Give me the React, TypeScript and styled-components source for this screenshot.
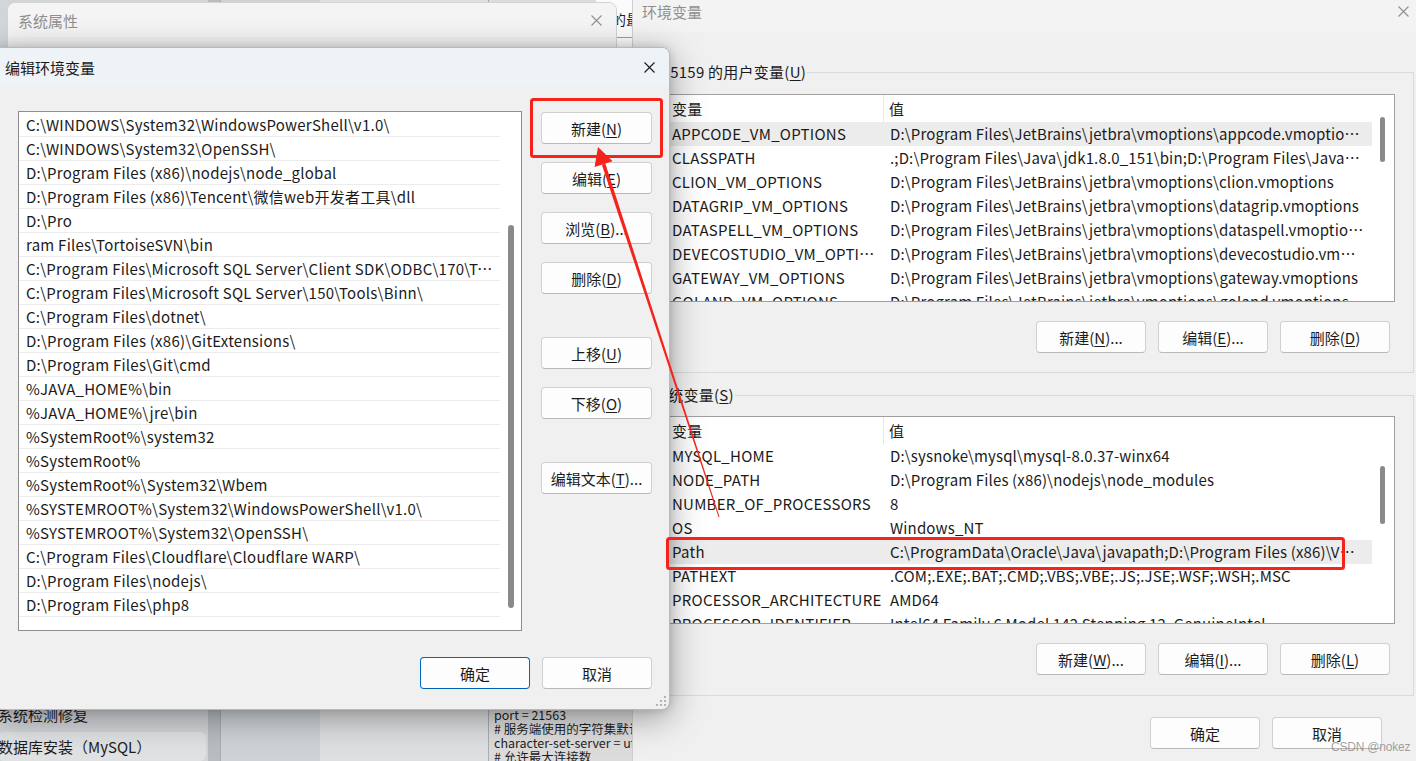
import React from "react";
import styled, { createGlobalStyle } from "styled-components";

const GlobalStyle = createGlobalStyle`
  html, body { margin: 0; padding: 0; }
  body {
    font-family: "Noto Sans CJK SC", "Noto Sans", sans-serif;
    font-size: 15px;
    letter-spacing: 0.25px;
    color: #1b1b1b;
    overflow: hidden;
    background: #eceef0;
  }
  * { box-sizing: border-box; }
  u { text-underline-offset: 2px; text-decoration-thickness: 1px; }
`;

const Desktop = styled.div`
  position: relative;
  width: 1416px;
  height: 761px;
  overflow: hidden;
  background: #eceef0;
`;

/* ---------- app behind everything (bottom left) ---------- */

const BackApp = styled.div`
  position: absolute;
  left: 0;
  top: 0;
  width: 632px;
  height: 761px;
  display: grid;
  grid-template-columns: 208px 12px 100px 168px 144px;
`;

const BackColumn = styled.div<{ $bg: string; $border?: boolean }>`
  background: ${(p) => p.$bg};
  border-left: ${(p) => (p.$border ? "1px solid #a9adb0" : "none")};
  display: flex;
  flex-direction: column;
  justify-content: flex-end;
  overflow: hidden;
`;

const SideItem = styled.div<{ $active?: boolean }>`
  height: 29px;
  line-height: 29px;
  margin: 0 0 ${(p) => (p.$active ? "0" : "3px")} -2px;
  width: 208px;
  border-radius: 6px;
  white-space: nowrap;
  letter-spacing: 0;
  color: #1d1d1d;
  background: ${(p) => (p.$active ? "rgba(255,255,255,0.28)" : "transparent")};
`;

const CodeText = styled.div`
  font-size: 12.5px;
  line-height: 14px;
  letter-spacing: 0;
  color: #1e1e1e;
  white-space: nowrap;
  padding-left: 5px;
  margin-bottom: -3px;
`;

/* ---------- generic window chrome ---------- */

const TitleBar = styled.div<{ $h: number; $bg: string; $pl: number; $pr: number; $pb?: number }>`
  height: ${(p) => p.$h}px;
  flex-shrink: 0;
  display: flex;
  align-items: center;
  justify-content: space-between;
  padding: 0 ${(p) => p.$pr}px ${(p) => p.$pb || 0}px ${(p) => p.$pl}px;
  background: ${(p) => p.$bg};
`;

const WinTitle = styled.span<{ $active?: boolean }>`
  font-size: 15px;
  letter-spacing: 0;
  color: ${(p) => (p.$active ? "#1a1a1a" : "#8f8f8f")};
  white-space: nowrap;
`;

function CloseIcon({ color }: { color: string }) {
  return (
    <svg width="11" height="11" viewBox="0 0 11 11">
      <path d="M0.5 0.5 L10.5 10.5 M10.5 0.5 L0.5 10.5" stroke={color} strokeWidth="1.1" fill="none" />
    </svg>
  );
}

/* ---------- partly hidden windows at top ---------- */

const DocWindow = styled.div`
  position: absolute;
  left: 596px;
  top: 0;
  width: 36px;
  height: 90px;
  background: #fbfbfb;
`;

const DocCell = styled.div`
  height: 38px;
  line-height: 38px;
  padding-left: 16px;
  font-size: 14px;
  white-space: nowrap;
  color: #222;
  border-bottom: 1px solid #9c9c9c;
`;

const SysWindow = styled.div`
  position: absolute;
  left: 7px;
  top: 2px;
  width: 610px;
  height: 420px;
  background: #f0f0f0;
  border: 1px solid #d3d3d3;
  border-radius: 8px 8px 0 0;
  overflow: hidden;
`;

/* ---------- environment variables window ---------- */

const EnvWindow = styled.div`
  position: absolute;
  left: 632px;
  top: 0;
  width: 784px;
  height: 761px;
  background: #f0f0f0;
  border-left: 1px solid #cfcfcf;
  display: flex;
  flex-direction: column;
`;

const EnvBody = styled.div`
  padding: 30px 2px 0 12px;
  display: flex;
  flex-direction: column;
`;

const Group = styled.fieldset<{ $pt: number; $pb: number; $mt?: number }>`
  margin: ${(p) => p.$mt || 0}px 0 0;
  min-width: 0;
  border: 1px solid #dadada;
  padding: ${(p) => p.$pt}px 18px ${(p) => p.$pb}px 18px;
`;

const GroupLegend = styled.legend`
  padding: 0 1px;
  margin-left: -12px;
  height: 20px;
  line-height: 20px;
  font-size: 15px;
  white-space: nowrap;
`;

const ListView = styled.div`
  height: 208px;
  border: 1px solid #a0a0a0;
  background: #fff;
  display: grid;
  grid-template-columns: 1fr 22px;
  overflow: hidden;
`;

const ListRows = styled.div`
  min-width: 0;
  overflow: hidden;
`;

const HeaderRow = styled.div`
  display: grid;
  grid-template-columns: 219px 1fr;
  height: 27px;
`;

const HeaderCell = styled.div<{ $first?: boolean }>`
  line-height: 27px;
  padding-left: ${(p) => (p.$first ? 7 : 5)}px;
  border-right: ${(p) => (p.$first ? "1px solid #e6e6e6" : "none")};
`;

const DataRow = styled.div<{ $selected?: boolean }>`
  display: grid;
  grid-template-columns: 219px 1fr;
  height: 24px;
  line-height: 24px;
  background: ${(p) => (p.$selected ? "#ececec" : "transparent")};
`;

const Cell = styled.div<{ $first?: boolean }>`
  white-space: nowrap;
  overflow: hidden;
  text-overflow: ellipsis;
  letter-spacing: ${(p) => (p.$first ? "0.25px" : "0.15px")};
  padding: ${(p) => (p.$first ? "0 2px 0 7px" : "0 8px 0 6px")};
`;

const ScrollTrack = styled.div<{ $top: number; $left: number }>`
  padding: ${(p) => p.$top}px 0 0 ${(p) => p.$left}px;
`;

const ScrollThumb = styled.div<{ $h: number; $w: number }>`
  width: ${(p) => p.$w}px;
  height: ${(p) => p.$h}px;
  background: #8a8a8a;
  border-radius: 3px;
`;

const ButtonRow = styled.div<{ $mt: number; $pr: number }>`
  margin-top: ${(p) => p.$mt}px;
  padding-right: ${(p) => p.$pr}px;
  display: flex;
  justify-content: flex-end;
  gap: 12px;
`;

const Button = styled.button<{ $primary?: boolean; $mt?: number; $full?: boolean }>`
  width: ${(p) => (p.$full ? "100%" : "110px")};
  height: 32px;
  flex-shrink: 0;
  margin: ${(p) => p.$mt || 0}px 0 0;
  padding: 0;
  font-family: inherit;
  font-size: 15px;
  letter-spacing: 0;
  color: #1b1b1b;
  background: #fdfdfd;
  border: 1px solid ${(p) => (p.$primary ? "#0067c0" : "#d0d0d0")};
  border-bottom-color: ${(p) => (p.$primary ? "#0060b4" : "#b9b9b9")};
  border-radius: 4px;
  white-space: nowrap;
`;

/* ---------- edit dialog ---------- */

const EditDialog = styled.div`
  position: absolute;
  left: -6px;
  top: 47px;
  width: 676px;
  height: 663px;
  background: #f0f0f0;
  border: 1px solid #b9b9b9;
  border-radius: 8px;
  box-shadow: 0 8px 34px rgba(0, 0, 0, 0.36), 0 0 10px rgba(0, 0, 0, 0.14);
  display: flex;
  flex-direction: column;
  overflow: hidden;
`;

const DialogBody = styled.div`
  padding: 25px 17px 0 23px;
  display: grid;
  grid-template-columns: 504px 111px;
  column-gap: 19px;
`;

const PathList = styled.div`
  height: 520px;
  border: 1px solid #8e8e8e;
  background: #fff;
  display: grid;
  grid-template-columns: 1fr 21px;
  overflow: hidden;
`;

const PathRows = styled.div`
  min-width: 0;
  padding-top: 1px;
  overflow: hidden;
`;

const PathRow = styled.div`
  height: 24px;
  line-height: 24px;
  padding: 0 4px 0 7px;
  border-bottom: 1px solid #ececec;
  white-space: nowrap;
  overflow: hidden;
  text-overflow: ellipsis;
`;

const SideButtons = styled.div`
  padding-top: 1px;
  display: flex;
  flex-direction: column;
  gap: 18px;
`;

const DialogFooter = styled.div`
  padding: 26px 17px 0 0;
  display: flex;
  justify-content: flex-end;
  gap: 12px;
`;

const Grip = styled.svg`
  position: absolute;
  right: 2px;
  bottom: 2px;
`;

/* ---------- annotation overlay ---------- */

const Overlay = styled.svg`
  position: absolute;
  left: 0;
  top: 0;
  pointer-events: none;
`;

const Watermark = styled.div`
  position: absolute;
  left: 1331px;
  top: 739px;
  font-size: 12px;
  line-height: 16px;
  color: rgba(130, 130, 130, 0.75);
  font-family: "Liberation Sans", Arial, sans-serif;
  letter-spacing: -0.2px;
`;

const paths = [
  "C:\\WINDOWS\\System32\\WindowsPowerShell\\v1.0\\",
  "C:\\WINDOWS\\System32\\OpenSSH\\",
  "D:\\Program Files (x86)\\nodejs\\node_global",
  "D:\\Program Files (x86)\\Tencent\\微信web开发者工具\\dll",
  "D:\\Pro",
  "ram Files\\TortoiseSVN\\bin",
  "C:\\Program Files\\Microsoft SQL Server\\Client SDK\\ODBC\\170\\Tools\\Binn\\",
  "C:\\Program Files\\Microsoft SQL Server\\150\\Tools\\Binn\\",
  "C:\\Program Files\\dotnet\\",
  "D:\\Program Files (x86)\\GitExtensions\\",
  "D:\\Program Files\\Git\\cmd",
  "%JAVA_HOME%\\bin",
  "%JAVA_HOME%\\jre\\bin",
  "%SystemRoot%\\system32",
  "%SystemRoot%",
  "%SystemRoot%\\System32\\Wbem",
  "%SYSTEMROOT%\\System32\\WindowsPowerShell\\v1.0\\",
  "%SYSTEMROOT%\\System32\\OpenSSH\\",
  "C:\\Program Files\\Cloudflare\\Cloudflare WARP\\",
  "D:\\Program Files\\nodejs\\",
  "D:\\Program Files\\php8",
];

const jb = "D:\\Program Files\\JetBrains\\jetbra\\vmoptions\\";

const userVars: [string, string][] = [
  ["APPCODE_VM_OPTIONS", jb + "appcode.vmoptions;"],
  ["CLASSPATH", ".;D:\\Program Files\\Java\\jdk1.8.0_151\\bin;D:\\Program Files\\Java\\jdk1.8.0_151\\lib"],
  ["CLION_VM_OPTIONS", jb + "clion.vmoptions"],
  ["DATAGRIP_VM_OPTIONS", jb + "datagrip.vmoptions"],
  ["DATASPELL_VM_OPTIONS", jb + "dataspell.vmoptions"],
  ["DEVECOSTUDIO_VM_OPTIONS", jb + "devecostudio.vmoptions"],
  ["GATEWAY_VM_OPTIONS", jb + "gateway.vmoptions"],
  ["GOLAND_VM_OPTIONS", jb + "goland.vmoptions"],
];

const systemVars: [string, string][] = [
  ["MYSQL_HOME", "D:\\sysnoke\\mysql\\mysql-8.0.37-winx64"],
  ["NODE_PATH", "D:\\Program Files (x86)\\nodejs\\node_modules"],
  ["NUMBER_OF_PROCESSORS", "8"],
  ["OS", "Windows_NT"],
  ["Path", "C:\\ProgramData\\Oracle\\Java\\javapath;D:\\Program Files (x86)\\VMware\\VMware Workstation\\bin\\"],
  ["PATHEXT", ".COM;.EXE;.BAT;.CMD;.VBS;.VBE;.JS;.JSE;.WSF;.WSH;.MSC"],
  ["PROCESSOR_ARCHITECTURE", "AMD64"],
  ["PROCESSOR_IDENTIFIER", "Intel64 Family 6 Model 142 Stepping 12, GenuineIntel"],
];

interface VarTableProps {
  rows: [string, string][];
  selected: number;
  thumbTop: number;
  thumbHeight: number;
}

function VarTable({ rows, selected, thumbTop, thumbHeight }: VarTableProps) {
  return (
    <ListView>
      <ListRows>
        <HeaderRow>
          <HeaderCell $first>变量</HeaderCell>
          <HeaderCell>值</HeaderCell>
        </HeaderRow>
        {rows.map(([name, value], i) => (
          <DataRow key={name} $selected={i === selected}>
            <Cell $first>{name}</Cell>
            <Cell>{value}</Cell>
          </DataRow>
        ))}
      </ListRows>
      <ScrollTrack $top={thumbTop} $left={8}>
        <ScrollThumb $w={5} $h={thumbHeight} />
      </ScrollTrack>
    </ListView>
  );
}

export default function App() {
  // arrow geometry: tip near the 新建 button, tail down by the Path row
  const tip = [598, 147];
  const tail = [719, 517];
  const len = Math.hypot(tail[0] - tip[0], tail[1] - tip[1]);
  const u = [(tail[0] - tip[0]) / len, (tail[1] - tip[1]) / len];
  const n = [u[1], -u[0]];
  const base = [tip[0] + u[0] * 18, tip[1] + u[1] * 18];
  const pt = (p: number[], k: number) => `${p[0] + n[0] * k},${p[1] + n[1] * k}`;
  const head = `${tip[0]},${tip[1]} ${pt(base, 9.5)} ${pt(base, -9.5)}`;
  const shaft = `${pt(base, 1.8)} ${pt(tail, 0.5)} ${pt(tail, -0.5)} ${pt(base, -1.8)}`;

  return (
    <>
      <GlobalStyle />
      <Desktop>
        <BackApp>
          <BackColumn $bg="#d3d6d9">
            <SideItem>系统检测修复</SideItem>
            <SideItem $active>数据库安装（MySQL）</SideItem>
          </BackColumn>
          <BackColumn $bg="#b9bdc0" />
          <BackColumn $bg="#cfd3d6" $border />
          <BackColumn $bg="#dedfe0" />
          <BackColumn $bg="#dcdcdc" $border>
            <CodeText>
              port = 21563
              <br /># 服务端使用的字符集默认为8比特编码
              <br />character-set-server = utf8
              <br /># 允许最大连接数
            </CodeText>
          </BackColumn>
        </BackApp>

        <DocWindow>
          <DocCell>的最大</DocCell>
        </DocWindow>

        <SysWindow>
          <TitleBar $h={34} $bg="#f4f4f4" $pl={10} $pr={14}>
            <WinTitle>系统属性</WinTitle>
            <CloseIcon color="#8f8f8f" />
          </TitleBar>
        </SysWindow>

        <EnvWindow>
          <TitleBar $h={32} $bg="#f3f3f3" $pl={9} $pr={7} $pb={9}>
            <WinTitle>环境变量</WinTitle>
            <CloseIcon color="#8f8f8f" />
          </TitleBar>
          <EnvBody>
            <Group $pt={12} $pb={19}>
              <GroupLegend>
                135159 的用户变量(<u>U</u>)
              </GroupLegend>
              <VarTable rows={userVars} selected={0} thumbTop={22} thumbHeight={45} />
              <ButtonRow $mt={19} $pr={5}>
                <Button>
                  新建(<u>N</u>)...
                </Button>
                <Button>
                  编辑(<u>E</u>)...
                </Button>
                <Button>
                  删除(<u>D</u>)
                </Button>
              </ButtonRow>
            </Group>
            <Group $pt={11} $pb={20} $mt={12}>
              <GroupLegend>
                系统变量(<u>S</u>)
              </GroupLegend>
              <VarTable rows={systemVars} selected={4} thumbTop={49} thumbHeight={58} />
              <ButtonRow $mt={19} $pr={5}>
                <Button>
                  新建(<u>W</u>)...
                </Button>
                <Button>
                  编辑(<u>I</u>)...
                </Button>
                <Button>
                  删除(<u>L</u>)
                </Button>
              </ButtonRow>
            </Group>
            <ButtonRow $mt={21} $pr={32}>
              <Button>确定</Button>
              <Button>取消</Button>
            </ButtonRow>
          </EnvBody>
        </EnvWindow>

        <EditDialog>
          <TitleBar $h={38} $bg="#eef3f8" $pl={10} $pr={14}>
            <WinTitle $active>编辑环境变量</WinTitle>
            <CloseIcon color="#1a1a1a" />
          </TitleBar>
          <DialogBody>
            <PathList>
              <PathRows>
                {paths.map((p) => (
                  <PathRow key={p}>{p}</PathRow>
                ))}
              </PathRows>
              <ScrollTrack $top={113} $left={8}>
                <ScrollThumb $w={6} $h={383} />
              </ScrollTrack>
            </PathList>
            <SideButtons>
              <Button $full>
                新建(<u>N</u>)
              </Button>
              <Button $full>
                编辑(<u>E</u>)
              </Button>
              <Button $full>
                浏览(<u>B</u>)...
              </Button>
              <Button $full>
                删除(<u>D</u>)
              </Button>
              <Button $full $mt={25}>
                上移(<u>U</u>)
              </Button>
              <Button $full>
                下移(<u>O</u>)
              </Button>
              <Button $full $mt={25}>
                编辑文本(<u>T</u>)...
              </Button>
            </SideButtons>
          </DialogBody>
          <DialogFooter>
            <Button $primary>确定</Button>
            <Button>取消</Button>
          </DialogFooter>
          <Grip width="12" height="12" viewBox="0 0 12 12">
            {[
              [9, 1],
              [9, 5],
              [5, 5],
              [9, 9],
              [5, 9],
              [1, 9],
            ].map(([x, y]) => (
              <rect key={`${x}-${y}`} x={x} y={y} width="2" height="2" fill="#b3b3b3" />
            ))}
          </Grip>
        </EditDialog>

        <Overlay width="1416" height="761" viewBox="0 0 1416 761">
          <rect x="531.5" y="99.5" width="130" height="57" rx="2" fill="none" stroke="#f5231c" strokeWidth="3" />
          <rect x="667.5" y="538.5" width="676" height="30" rx="2" fill="none" stroke="#f5231c" strokeWidth="3" />
          <polygon points={shaft} fill="#f5231c" />
          <polygon points={head} fill="#f5231c" />
        </Overlay>
        <Watermark>CSDN @nokez</Watermark>
      </Desktop>
    </>
  );
}
